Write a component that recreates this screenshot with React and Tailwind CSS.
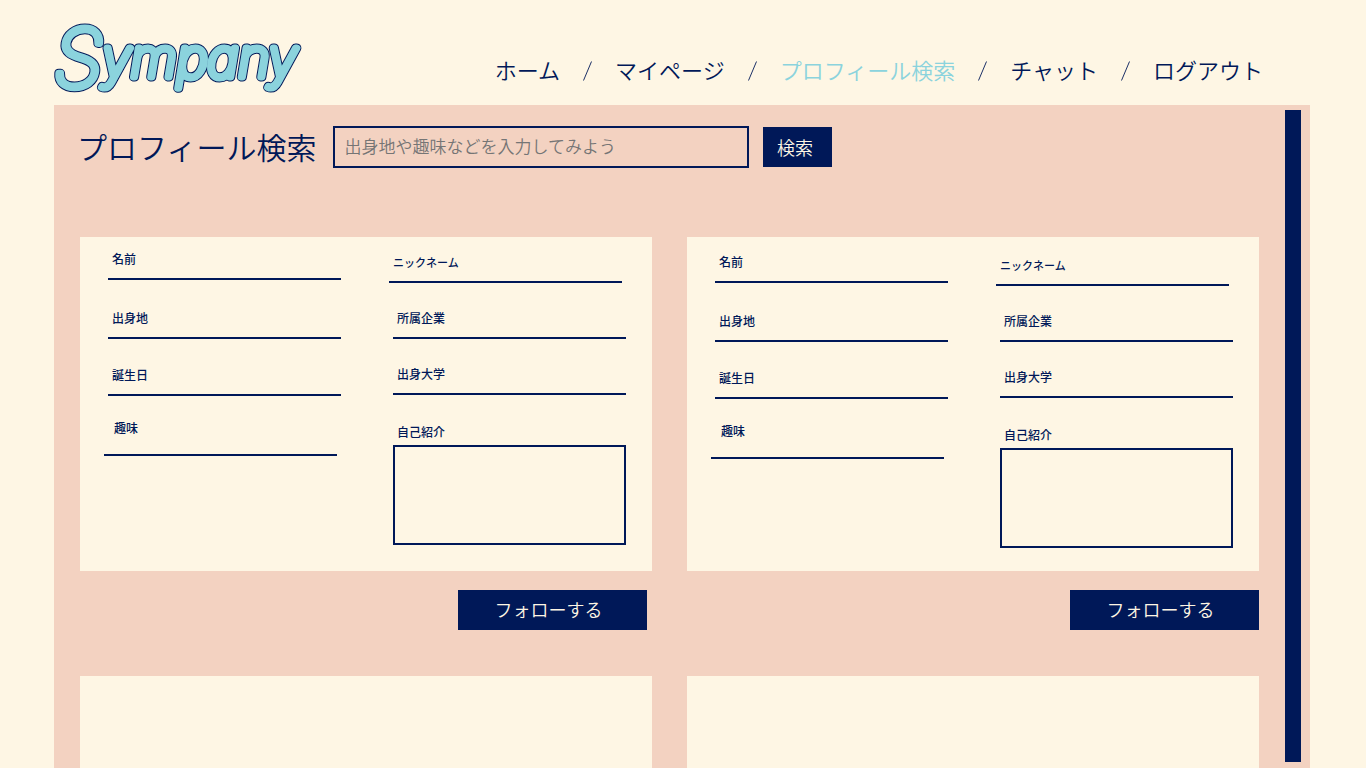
import React, { useId } from "react";

const NAV = [
  { label: "ホーム" },
  { label: "マイページ" },
  { label: "プロフィール検索", current: true },
  { label: "チャット" },
  { label: "ログアウト" },
];

function Logo() {
  return (
    <a href="#" aria-label="Sympany">
      <svg width="252" height="80" viewBox="0 0 252 80" className="block overflow-visible font-['Inter',sans-serif] font-thin italic">
        <defs>
          <text id="wordmark" strokeLinejoin="round" strokeLinecap="round">
            <tspan x="0" y="67" fontSize="80">S</tspan>
            <tspan x="48" y="57" fontSize="53">ympany</tspan>
          </text>
        </defs>
        <use href="#wordmark" fill="#001858" stroke="#001858" strokeWidth="9" />
        <use href="#wordmark" fill="#8bd3dd" stroke="#8bd3dd" strokeWidth="7" />
      </svg>
    </a>
  );
}

function Slash() {
  return (
    <svg width="9" height="20" viewBox="0 0 9 20" className="shrink-0" aria-hidden="true">
      <path d="M0.5 19.5 8.5 0.5" stroke="#001858" strokeWidth="0.9" />
    </svg>
  );
}

function Header() {
  return (
    <header className="flex h-[105px] shrink-0 items-start justify-between pt-5 pr-[47px]">
      <Logo />
      <nav className="pt-[33px]">
        <ul className="flex items-center gap-[23px]">
          {NAV.map((item, i) => (
            <React.Fragment key={item.label}>
              {i > 0 && (
                <li className="pt-1">
                  <Slash />
                </li>
              )}
              <li>
                <a
                  href="#"
                  aria-current={item.current ? "page" : undefined}
                  className={`block text-[22px] leading-8 font-[350] whitespace-nowrap ${item.current ? "text-[#8bd3dd]" : ""}`}
                >
                  {item.label}
                </a>
              </li>
            </React.Fragment>
          ))}
        </ul>
      </nav>
    </header>
  );
}

function Field({ label, className = "", labelClass = "text-xs", inputClass = "h-[13px]" }) {
  const id = useId();
  return (
    <div className={className}>
      <label htmlFor={id} className={`block px-1 leading-4 font-medium ${labelClass}`}>
        {label}
      </label>
      <input id={id} readOnly className={`block w-full border-b-2 border-[#001858] px-1 text-xs outline-none ${inputClass}`} />
    </div>
  );
}

function ProfileForm({ className }) {
  const bioId = useId();
  return (
    <div className={`grid grid-cols-2 gap-x-[52px] pr-[26px] pl-7 ${className}`}>
      <div>
        <Field label="名前" />
        <Field label="出身地" className="pt-[30px]" />
        <Field label="誕生日" className="pt-7" />
        <Field label="趣味" className="-ml-1 mr-1 pt-6" labelClass="pl-[10px] text-xs" inputClass="h-5" />
      </div>
      <div className="pt-[3px]">
        <Field label="ニックネーム" className="-ml-1 mr-1" labelClass="text-[11px]" />
        <Field label="所属企業" className="pt-[27px]" />
        <Field label="出身大学" className="pt-[27px]" />
        <div className="pt-[29px]">
          <label htmlFor={bioId} className="block px-1 text-xs leading-4 font-medium">
            自己紹介
          </label>
          <textarea
            id={bioId}
            readOnly
            className="mt-[5px] block h-[100px] w-full resize-none border-2 border-[#001858] p-1 text-xs outline-none"
          />
        </div>
      </div>
    </div>
  );
}

function ProfileCard({ formClass, footerClass = "", empty }) {
  return (
    <article>
      <div className="h-[334px] bg-[#fef6e4]">{!empty && <ProfileForm className={formClass} />}</div>
      {!empty && (
        <div className={`flex justify-end pt-[19px] ${footerClass}`}>
          <button type="button" className="h-10 w-[189px] bg-[#001858] pr-2 pb-[2px] text-lg leading-[38px] font-[350] text-[#fef6e4]">
            フォローする
          </button>
        </div>
      )}
    </article>
  );
}

function SearchBar() {
  return (
    <form className="-ml-[3px] flex h-[42px] items-center" onSubmit={(e) => e.preventDefault()}>
      <h1 className="shrink-0 pb-[2px] text-[30px] leading-[38px] font-[350]">
        <label htmlFor="profile-search">プロフィール検索</label>
      </h1>
      <input
        id="profile-search"
        type="search"
        placeholder="出身地や趣味などを入力してみよう"
        className="ml-[17px] h-[42px] w-[416px] border-2 border-[#001858] px-[9px] pb-1 text-[17px] font-[350] placeholder-[#757575] outline-none"
      />
      <button type="submit" className="ml-[14px] h-10 w-[69px] bg-[#001858] pr-[6px] text-lg leading-10 font-[350] text-[#fef6e4]">
        検索
      </button>
    </form>
  );
}

export default function App() {
  return (
    <div className="flex h-screen flex-col overflow-hidden bg-[#fef6e4] pr-14 pl-[54px] font-['Noto_Sans_CJK_JP',sans-serif] text-[#001858]">
      <Header />
      <main className="flex min-h-0 flex-1 bg-[#f3d2c1]">
        <div className="min-w-0 flex-1 overflow-hidden px-[26px] pt-[21px]">
          <SearchBar />
          <div className="mt-[69px] grid grid-cols-2 gap-x-[35px] gap-y-[46px]">
            <ProfileCard formClass="pt-[14px]" footerClass="pr-[5px]" />
            <ProfileCard formClass="pt-[17px]" />
            <ProfileCard empty />
            <ProfileCard empty />
          </div>
        </div>
        <div className="mt-[5px] mr-[9px] mb-[6px] w-4 bg-[#001858]" />
      </main>
    </div>
  );
}
